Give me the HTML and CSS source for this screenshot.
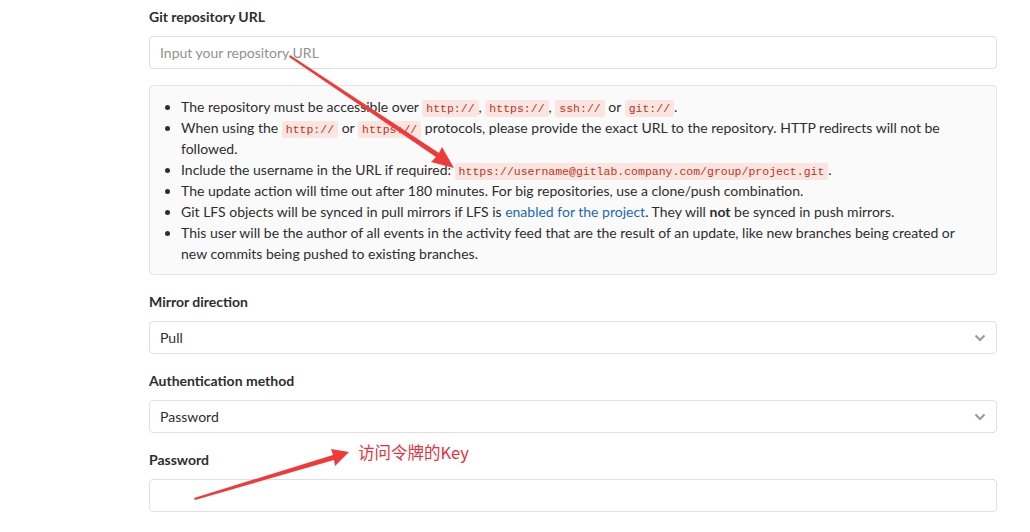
FILE: index.html
```html
<!DOCTYPE html>
<html lang="en">
    <head>
        <meta charset="UTF-8">
        <title>Mirror repository</title>
        <link rel="stylesheet" href="styles.css">
    </head>
    <body>

    <div class="form">
        <div class="form-group">
            <label>Git repository URL</label>
            <div class="input placeholder">Input your repository URL</div>
        </div>

        <div class="info-box">
            <ul>
                <li>The repository must be accessible over <code>http://</code>, <code>https://</code>, <code>ssh://</code> or <code>git://</code>.</li>
                <li>When using the <code>http://</code> or <code>https://</code> protocols, please provide the exact URL to the repository. HTTP redirects will not be followed.</li>
                <li>Include the username in the URL if required: <code>https://username@gitlab.company.com/group/project.git</code>.</li>
                <li>The update action will time out after 180 minutes. For big repositories, use a clone/push combination.</li>
                <li>Git LFS objects will be synced in pull mirrors if LFS is <a href="#">enabled for the project</a>. They will <strong>not</strong> be synced in push mirrors.</li>
                <li>This user will be the author of all events in the activity feed that are the result of an update, like new branches being created or new commits being pushed to existing branches.</li>
            </ul>
        </div>

        <div class="form-group">
            <label>Mirror direction</label>
            <div class="input select">Pull
                <svg class="chevron" width="12" height="8" viewBox="0 0 12 8"><path d="M1.5 1.5 L6 6 L10.5 1.5" fill="none" stroke="#999" stroke-width="2"/></svg>
            </div>
        </div>

        <div class="form-group">
            <label>Authentication method</label>
            <div class="input select">Password
                <svg class="chevron" width="12" height="8" viewBox="0 0 12 8"><path d="M1.5 1.5 L6 6 L10.5 1.5" fill="none" stroke="#999" stroke-width="2"/></svg>
            </div>
        </div>

        <div class="form-group">
            <label>Password</label>
            <div class="input"></div>
        </div>
    </div>

    <!-- 스크린샷 위에 그려진 빨간 화살표 -->
    <svg class="arrows" width="1030" height="532" viewBox="0 0 1030 532">
        <polygon points="290,55 439,153 442,147 454,168 431,162 436,157 289,57" fill="#f03a3a"/>
        <polygon points="194,498 333,455 331,449 349,452 335,466 334,460 195,500" fill="#f03a3a"/>
    </svg>
    <div class="note">访问令牌的Key</div>

    </body>
</html>
```

FILE: styles.css
```css
* {
    box-sizing: border-box;
    margin: 0;
    padding: 0;
}
body {
    background-color: #fff;
    font-family: Lato, "Noto Sans", sans-serif;
    font-size: 14px;
    color: #2e2e2e;
    position: relative;
    width: 1030px;
    height: 532px;
    overflow: hidden;
}
.form {
    width: 848px;
    margin-left: 149px;
    padding-top: 7px;
}
.form-group {
    margin-bottom: 17px;
}
.form-group label {
    display: block;
    font-weight: bold;
    line-height: 20px;
    margin-bottom: 9px;
}
.input {
    position: relative;
    height: 33px;
    border: 1px solid #dfdfdf;
    border-radius: 4px;
    padding-left: 10px;
    line-height: 31px;
    color: #2e2e2e;
}
.placeholder {
    color: #919191;
}
.chevron {
    position: absolute;
    right: 10px;
    top: 12px;
}
.info-box {
    margin-top: -1px;
    margin-bottom: 17px;
    height: 190px;
    background-color: #fafafa;
    border: 1px solid #e5e5e5;
    border-radius: 4px;
    padding: 10px 16px;
}
.info-box ul {
    padding-left: 15px;
    line-height: 21px;
}
.info-box code {
    font-family: "Liberation Mono", monospace;
    font-size: 11.5px;
    line-height: 1;
    color: #c0341d;
    background-color: #fbe5e1;
    border-radius: 3px;
    padding: 2px 4px;
}
.info-box a {
    color: #1b69b6;
    text-decoration: none;
}
.arrows {
    position: absolute;
    left: 0;
    top: 0;
}
.note {
    position: absolute;
    left: 358px;
    top: 440px;
    font-family: "Noto Sans CJK SC", sans-serif;
    font-size: 16.5px;
    color: #e8303a;
}
```
